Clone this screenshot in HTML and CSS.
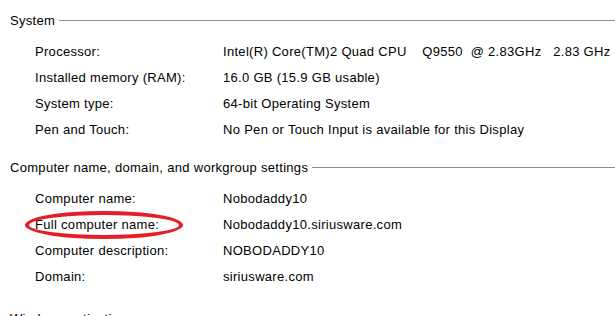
FILE: index.html
```html
<!DOCTYPE html>
<html lang="en">
<head>
    <meta charset="UTF-8">
    <title>System</title>
    <link rel="stylesheet" href="styles.css">
</head>
<body>

    <!-- System -->
    <section class="group">
        <div class="group-title"><span>System</span></div>
        <div class="rows">
            <div class="label">Processor:</div>
            <div class="value pre">Intel(R) Core(TM)2 Quad CPU    Q9550  @ 2.83GHz   2.83 GHz</div>
            <div class="label">Installed memory (RAM):</div>
            <div class="value">16.0 GB (15.9 GB usable)</div>
            <div class="label">System type:</div>
            <div class="value">64-bit Operating System</div>
            <div class="label">Pen and Touch:</div>
            <div class="value">No Pen or Touch Input is available for this Display</div>
        </div>
    </section>

    <!-- Computer name -->
    <section class="group">
        <div class="group-title"><span>Computer name, domain, and workgroup settings</span></div>
        <div class="rows">
            <div class="label">Computer name:</div>
            <div class="value">Nobodaddy10</div>
            <div class="label marked">Full computer name:<span class="circle"></span></div>
            <div class="value">Nobodaddy10.siriusware.com</div>
            <div class="label">Computer description:</div>
            <div class="value">NOBODADDY10</div>
            <div class="label">Domain:</div>
            <div class="value">siriusware.com</div>
        </div>
    </section>

    <section class="group last">
        <div class="group-title"><span>Windows activation</span></div>
    </section>

</body>
</html>
```

FILE: styles.css
```css
body {
    margin: 0;
    padding: 10px 0 0 10px;
    background: #fff;
    color: #000;
    font-family: 'Liberation Sans', Arial, sans-serif;
    font-size: 13px;
    letter-spacing: 0.3px;
    overflow: hidden;
}

.group {
    margin-bottom: 14px;
}

.group.last {
    margin-top: 18px;
}

.group-title {
    display: flex;
    align-items: center;
    height: 20px;
    gap: 4px;
}

.group-title::after {
    content: "";
    flex: 1;
    border-top: 1px solid #8c8c8c;
    margin-top: 1px;
}

.rows {
    display: grid;
    grid-template-columns: 188px 1fr;
    grid-auto-rows: 26px;
    padding: 9px 0 0 25px;
}

.label,
.value {
    line-height: 26px;
    white-space: nowrap;
}

.pre {
    white-space: pre;
}

.marked {
    position: relative;
}

/* red hand-drawn ring over the label */
.circle {
    position: absolute;
    left: -10px;
    top: -1px;
    width: 150px;
    height: 20px;
    border: 4px solid #e51d25;
    border-radius: 50%;
}
```
